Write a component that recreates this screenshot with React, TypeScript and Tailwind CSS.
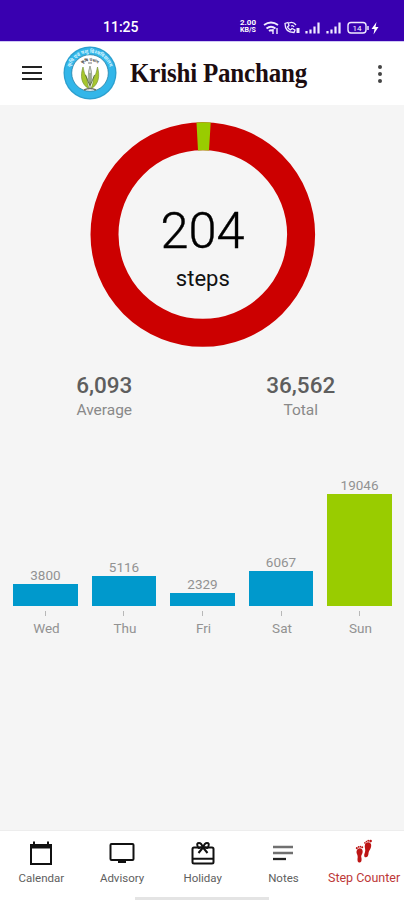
import type { ReactNode } from "react";

const days = [
  { name: "Wed", steps: 3800, height: 22 },
  { name: "Thu", steps: 5116, height: 30 },
  { name: "Fri", steps: 2329, height: 13 },
  { name: "Sat", steps: 6067, height: 35 },
  { name: "Sun", steps: 19046, height: 112, reached: true }
];

function StatusBar() {
  return (
    <div className="flex h-[41px] shrink-0 items-start bg-[#3900b0] pl-[103px] pt-[19px] text-white">
      <span className="w-[134px] text-[14px] font-medium leading-[17px]">11:25</span>
      <div className="flex w-[22px] flex-col items-center text-[8px] font-bold leading-[8px]">
        <span>2.00</span>
        <span className="text-[7px] leading-[7px]">KB/S</span>
      </div>
      <svg className="h-[18px] w-[126px]" viewBox="259 19 126 18" fill="none" stroke="#f1ebff">
        {/* wifi */}
        <path d="M264 25q7-5 14 0M266.500 28.500q4.500-3.500 9 0M269 31q2-1.500 4 0" strokeWidth="1.800" />
        <path d="M273 34v-5M277 28v6" strokeWidth="1.400" />
        {/* wifi calling */}
        <path d="M285 23.500q0 9 9 9l1-2.500-3-1.500-1.500 1.500q-2-1-3-3l1.500-1.500-1-3ZM289 23q4-2 7 2M291 26q2-1 3 1" strokeWidth="1.300" />
        <path d="M298 33v-5" strokeWidth="3" />
        {/* signal */}
        <path d="M306.500 33.500v-2.500M310.500 33.500v-4M314.500 33.500v-7M318.500 33.500v-11" strokeWidth="2.200" />
        <path d="M327.500 33.500v-2.500M331.500 33.500v-4M335.500 33.500v-7M339.500 33.500v-11" strokeWidth="2.200" />
        {/* battery */}
        <rect x="348" y="22.500" width="18" height="10.500" rx="3" strokeWidth="1.400" />
        <path d="M368 26v4" strokeWidth="1.500" />
        <text x="357" y="30.700" fontSize="8" textAnchor="middle" fill="#fff" stroke="none">14</text>
        <path d="M376.500 22l-5 7h3l-1 5.500 5-7.500h-3Z" fill="#fff" stroke="none" />
      </svg>
    </div>
  );
}

function Logo() {
  return (
    <svg className="h-[54px] w-[54px]" viewBox="0 0 54 54">
      <defs>
        <path id="outer" d="M7.500 35A20.800 20.800 0 1 1 46.500 35" />
        <path id="inner" d="M14 25A13.500 13.500 0 0 1 40 25" />
      </defs>
      <circle cx="27" cy="27" r="26.500" fill="#2c9fce" />
      <circle cx="27" cy="27" r="25.200" fill="#32b6e9" />
      <circle cx="27" cy="27" r="18.300" fill="#fff" stroke="#277fa3" strokeWidth=".8" />
      <g fontFamily="Noto Sans, sans-serif" fontWeight="700">
        <text fontSize="5" fill="#d5f4ff">
          <textPath href="#outer" startOffset="50%" textAnchor="middle">कृषि एवं पशु विश्वविद्यालय</textPath>
        </text>
        <text fontSize="4" fill="#444">
          <textPath href="#inner" startOffset="50%" textAnchor="middle">कृषि पंचांग</textPath>
        </text>
      </g>
      <path d="M25 17h4" stroke="#777" />
      <path d="M26 43C18 38 17 30 20 21q1 7 4 11 0 5 2 11ZM28 43C36 38 37 30 34.500 21q-1 7-4 11 0 5-2.500 11Z" fill="#a7c62e" stroke="#6b8b2c" strokeWidth=".6" />
      <path d="M27 40q-3.500-10 0-20 3.500 10 0 20Z" fill="#d3dad1" stroke="#7b8577" strokeWidth=".7" />
      <path d="M27 43V27M22.500 29l4 10M31.500 29l-4 10" stroke="#4d642b" strokeWidth=".8" fill="none" />
      <path d="M21 44q6-3 12 0" stroke="#6d7365" strokeWidth="1.500" fill="none" />
    </svg>
  );
}

function Header() {
  return (
    <header className="flex h-16 shrink-0 items-center border-t border-[#cfc9f4] bg-white pb-0.5">
      <svg className="ml-[21px] h-4 w-[22px]" viewBox="0 0 22 16" stroke="#222" strokeWidth="2">
        <path d="M1 2h20M1 8h20M1 14h20" />
      </svg>
      <div className="ml-5">
        <Logo />
      </div>
      <h1 className="ml-[13px] w-[178px] origin-left scale-x-[0.925] whitespace-nowrap font-['Liberation_Serif',serif] text-[27px] font-bold leading-8 tracking-[-0.2px] text-[#1c0c10]">
        Krishi Panchang
      </h1>
      <div className="ml-[70px] mt-0.5 flex flex-col gap-[3px]">
        <span className="size-1 rounded-full bg-[#444]" />
        <span className="size-1 rounded-full bg-[#444]" />
        <span className="size-1 rounded-full bg-[#444]" />
      </div>
    </header>
  );
}

function StepRing() {
  return (
    <svg className="mx-auto mt-4 h-[228px] w-[228px] shrink-0" viewBox="88 121 228 228">
      <circle cx="202.800" cy="234.500" r="98.300" fill="none" stroke="#cc0000" strokeWidth="28" />
      <path d="M196.500 122.400Q203.600 121.900 210.700 122.500L209 150.500Q203.500 150 198 150.400Z" fill="#99cc00" />
      <text x="202.500" y="248" textAnchor="middle" fontSize="50.500" fontWeight="300" fill="#000" stroke="#000" strokeWidth=".4">204</text>
      <text x="202.800" y="286" textAnchor="middle" fontSize="22" fill="#111">steps</text>
    </svg>
  );
}

function Stat({ value, label }: { value: string; label: string }) {
  return (
    <div className="flex flex-1 flex-col items-center">
      <span className="text-[22.5px] font-medium leading-[26px] text-[#5e5e5e]">{value}</span>
      <span className="text-[15.5px] leading-6 text-[#898989]">{label}</span>
    </div>
  );
}

function WeekChart() {
  return (
    <div className="mt-[53px] flex h-[163px] shrink-0 gap-[13.600px] pl-[13px] pr-3">
      {days.map((day) => (
        <div key={day.name} className="flex w-[65px] flex-col items-center justify-end text-[13.5px] text-[#929292]">
          <span className="leading-[17px]">{day.steps}</span>
          <div
            className={day.reached ? "w-full shrink-0 bg-[#99cc00]" : "w-full shrink-0 bg-[#0099cc]"}
            style={{ height: day.height }}
          />
          <span className="mt-[5px] h-[5px] w-px shrink-0 bg-[#b8b8b8]" />
          <span className="mt-0.5 h-[22px] pl-0.5 leading-5">{day.name}</span>
        </div>
      ))}
    </div>
  );
}

function NavItem({ label, active = false, children }: { label: string; active?: boolean; children: ReactNode }) {
  return (
    <div className="flex w-[80.700px] shrink-0 flex-col items-center">
      <div className="flex h-[30px] items-center justify-center">{children}</div>
      <span
        className={
          active
            ? "mt-0.5 whitespace-nowrap text-[12.5px] leading-4 text-[#bd3838]"
            : "mt-0.5 whitespace-nowrap text-[11.5px] leading-4 text-[#606060]"
        }
      >
        {label}
      </span>
    </div>
  );
}

function BottomNav() {
  return (
    <nav className="flex h-[70px] shrink-0 flex-col border-t border-[#ededed] bg-white">
      <div className="flex h-[66px] pl-px pt-[7px]">
        <NavItem label="Calendar">
          <svg className="size-[26px]" viewBox="0 0 26 26" fill="none" stroke="#111" strokeWidth="2">
            <path d="M3 5h20v19H3ZM6 1.500V6M20 1.500V6" />
            <path d="M3 6.500h20" strokeWidth="4" />
          </svg>
        </NavItem>
        <NavItem label="Advisory">
          <svg className="h-[24px] w-[26px]" viewBox="0 0 26 24" fill="none" stroke="#111" strokeWidth="2">
            <rect x="1.500" y="3" width="23" height="16" rx="1" />
            <path d="M9 20.500h8" strokeWidth="3" />
          </svg>
        </NavItem>
        <NavItem label="Holiday">
          <svg className="size-[26px]" viewBox="0 0 26 26" fill="none" stroke="#111" strokeWidth="2">
            <rect x="2.500" y="7.500" width="21" height="16" rx="1.500" />
            <path d="M2.500 18.800h21M13 7.500l-4.500 5.500M13 7.500l4.500 5.500" />
            <path d="M13 7.500Q11.500 3 9 3T7.500 6t2.500 1.500ZM13 7.500Q14.500 3 17 3t1.500 3-2.500 1.500Z" />
          </svg>
        </NavItem>
        <NavItem label="Notes">
          <svg className="h-[16px] w-[22px]" viewBox="0 0 22 16" fill="none" strokeWidth="2.300">
            <path d="M1 2h20M1 8h20" stroke="#707070" />
            <path d="M1 14h13" stroke="#222" />
          </svg>
        </NavItem>
        <NavItem label="Step Counter" active>
          <svg className="mb-1 h-[25px] w-[18px]" viewBox="0 0 20 26" preserveAspectRatio="none" fill="#bd1515">
            <path d="M2 12C3.500 8.500 8.500 9 8.500 13c0 3-2 3.500-1.500 6 .8 3 .2 5.500-2 5.500S2.500 22 3 19C3.200 16 .8 15 2 12Z" />
            <path d="M11 6c1.500-4 7.500-3 7 1-.3 4-2.500 4.500-3 8-.2 2.500-1 4-3 4s-2.200-2.500-1-5c1.200-3-.8-5 0-8Z" />
            <circle cx="2" cy="9.500" r="1.100" />
            <circle cx="4" cy="8.200" r="1" />
            <circle cx="6" cy="8" r=".9" />
            <circle cx="8" cy="8.600" r="1.100" />
            <circle cx="17.300" cy="2.200" r="1.500" />
            <circle cx="14.700" cy="1.900" r="1" />
            <circle cx="12.700" cy="2.600" r=".9" />
            <circle cx="11" cy="4" r=".9" />
          </svg>
        </NavItem>
      </div>
      <div className="mx-auto h-[3px] w-[134px] shrink-0 bg-[#e4e4e4]" />
    </nav>
  );
}

export default function App() {
  return (
    <div className="flex h-[900px] w-[404px] flex-col overflow-hidden bg-[#f5f5f5] font-['Roboto',sans-serif]">
      <StatusBar />
      <Header />
      <main className="flex flex-1 flex-col">
        <StepRing />
        <div className="mt-[23px] flex h-[52px] shrink-0 pl-[6px] pr-[5px]">
          <Stat value="6,093" label="Average" />
          <Stat value="36,562" label="Total" />
        </div>
        <WeekChart />
      </main>
      <BottomNav />
    </div>
  );
}
